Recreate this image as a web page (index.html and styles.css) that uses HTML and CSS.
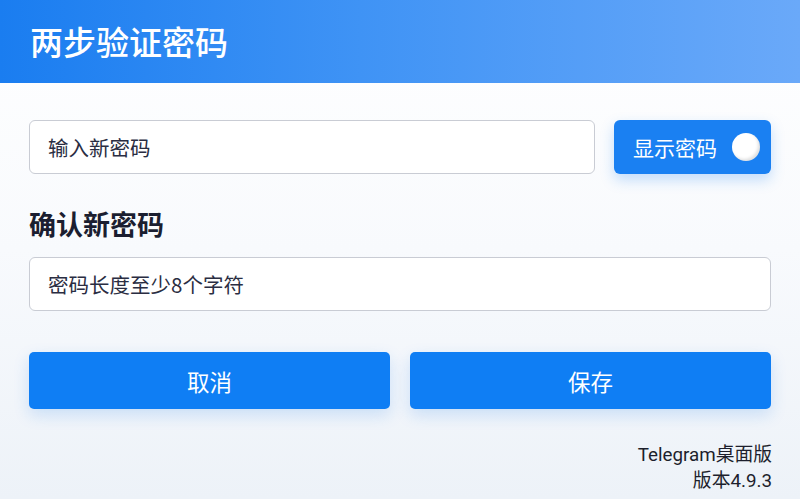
FILE: index.html
```html
<!DOCTYPE html>
<html lang="zh">
<head>
<meta charset="utf-8">
<link rel="stylesheet" href="styles.css">
</head>
<body>
<div class="page">
  <header class="header"><h1 class="title">两步验证密码</h1></header>
  <main class="content">
    <div class="row">
      <div class="field grow"><span class="ph">输入新密码</span></div>
      <button class="toggle"><span>显示密码</span><span class="knob"></span></button>
    </div>
    <h2 class="label">确认新密码</h2>
    <div class="field"><span class="ph">密码长度至少8个字符</span></div>
    <div class="actions">
      <button class="btn">取消</button>
      <button class="btn">保存</button>
    </div>
  </main>
  <footer class="footer">
    <div>Telegram桌面版</div>
    <div>版本4.9.3</div>
  </footer>
</div>
</body>
</html>
```
FILE: styles.css
```css
* { box-sizing: border-box; }
html, body { margin: 0; padding: 0; }
body {
  width: 800px; height: 499px; overflow: hidden;
  font-family: "Noto Sans CJK SC", "Noto Sans", sans-serif;
  background: linear-gradient(180deg, #ffffff 0%, #f8fafd 50%, #edf2f8 100%);
}
.page { display: flex; flex-direction: column; height: 499px; }
.header {
  height: 83px;
  background: linear-gradient(90deg, #1a7df0 0%, #3f93f5 45%, #6aa9f9 100%);
  display: flex; align-items: center; padding-left: 30px;
}
.title { margin: 0; color: #fff; font-size: 33px; font-weight: 500; line-height: 1; }
.content { padding: 37px 29px 0 29px; display: flex; flex-direction: column; }
.row { display: flex; gap: 19px; }
.field {
  height: 54px; border: 1px solid #c9ccd4; border-radius: 6px; background: #fff;
  display: flex; align-items: center; padding-left: 18px;
}
.grow { flex: 1; }
.ph { font-size: 20.5px; color: #2a2d42; }
.toggle {
  width: 157px; height: 54px; border: none; border-radius: 6px;
  background: #1a80f2; color: #fff; font-family: inherit; font-size: 21px;
  display: flex; align-items: center; justify-content: space-between;
  padding: 0 11px 0 19px;
  box-shadow: 0 6px 14px rgba(26,128,242,0.25);
}
.knob {
  width: 28px; height: 28px; border-radius: 50%; background: #fff;
  box-shadow: inset -2px -2px 3px rgba(0,0,0,0.12);
}
.label { margin: 30px 0 14px 0; font-size: 27px; font-weight: 700; color: #1b1e30; line-height: 39px; }
.actions { display: flex; gap: 20px; margin-top: 41px; }
.btn {
  flex: 1; height: 57px; border: none; border-radius: 5px;
  background: #0f7ef4; color: #fff; font-family: inherit; font-size: 22.5px;
  box-shadow: 0 6px 16px rgba(20,120,240,0.18);
}
.footer {
  margin-top: auto; padding: 0 28px 5px 0; text-align: right;
  font-family: Roboto, "Noto Sans CJK SC", sans-serif;
  font-size: 18.8px; line-height: 26px; color: #1d1f2c;
}
```
